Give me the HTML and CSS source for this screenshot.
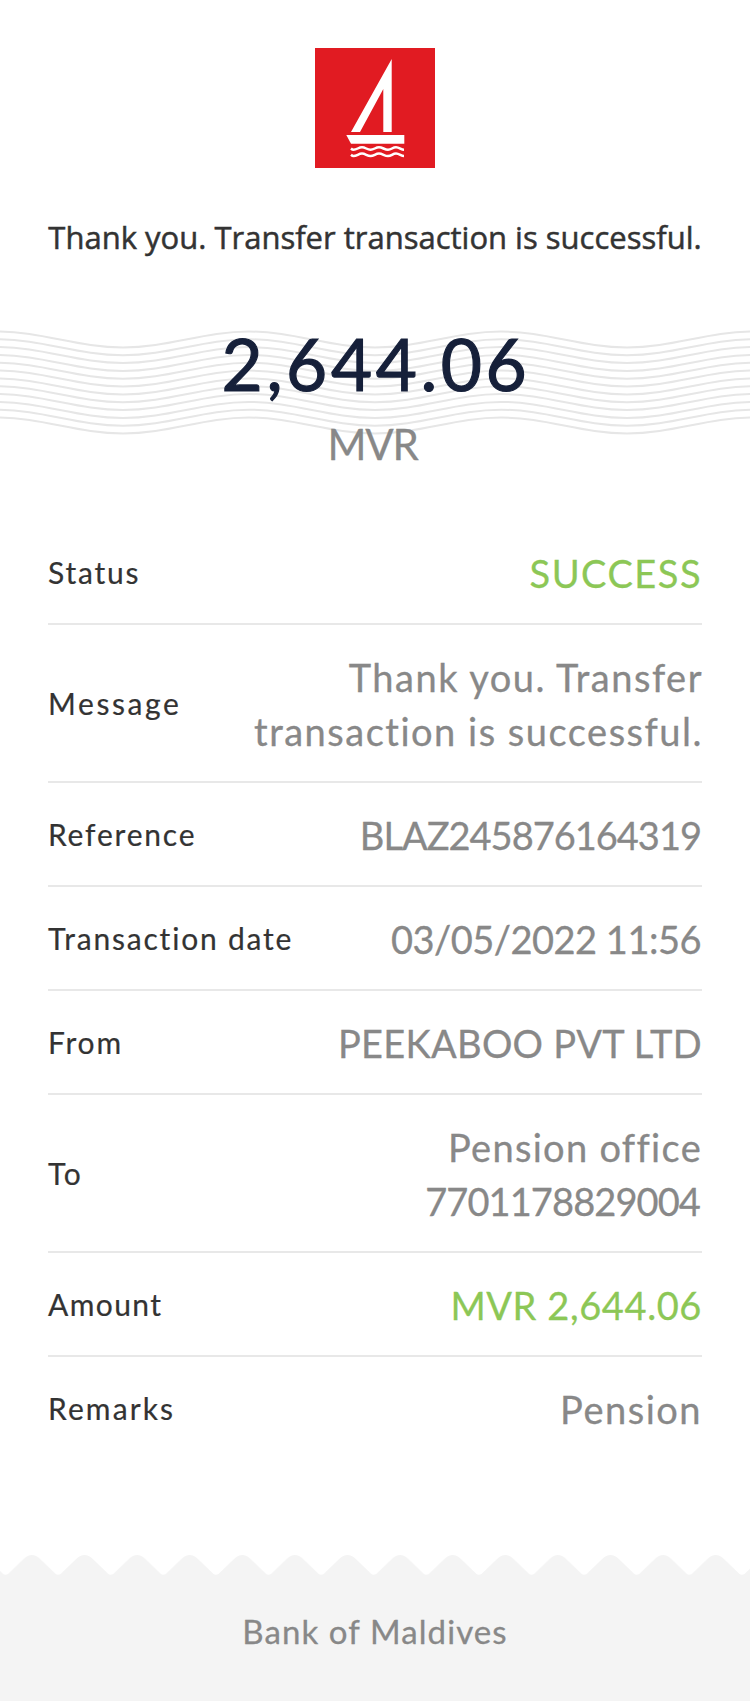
FILE: index.html
```html
<!DOCTYPE html>
<html lang="en">
<head>
    <meta charset="UTF-8">
    <meta name="viewport" content="width=device-width, initial-scale=1.0">
    <title>Transfer receipt</title>
    <link rel="stylesheet" href="styles.css">
</head>
<body>
    <div class="receipt">
        <header class="header">
            <svg class="logo" viewBox="0 0 120 120">
                <rect width="120" height="120" fill="#e11b22"/>
                <path d="M76.7 11V84H68.3V41L45 84H36Z" fill="#fff"/>
                <path d="M31.3 87H89.3V95.7H36Z" fill="#fff"/>
                <g fill="none" stroke="#fff" stroke-width="2.5">
                    <path id="sea" d="M36 100.5C37 101.4 37.5 101.8 38.5 101.8C42 101.8 43.5 99.2 47 99.2S52 101.8 55.5 101.8S60.5 99.2 64 99.2S69.5 101.8 73 101.8S77.5 99.2 81 99.2S86 101.8 89 101.8"/>
                    <use href="#sea" y="6.3"/>
                </g>
            </svg>
            <h1>Thank you. Transfer transaction is successful.</h1>
        </header>

        <section class="total">
            <svg class="waves" viewBox="0 0 750 110">
                <defs>
                    <path id="wave" d="M-129 19.5C-84 19.5-48 3.5-3 3.5S78 19.5 123 19.5S204 3.5 249 3.5S330 19.5 375 19.5S456 3.5 501 3.5S582 19.5 627 19.5S708 3.5 753 3.5"/>
                </defs>
                <g fill="none" stroke="#e6e6e6" stroke-width="2">
                    <use href="#wave"/>
                    <use href="#wave" y="7.8"/>
                    <use href="#wave" y="15.6"/>
                    <use href="#wave" y="23.4"/>
                    <use href="#wave" y="31.3"/>
                    <use href="#wave" y="39.1"/>
                    <use href="#wave" y="46.9"/>
                    <use href="#wave" y="54.7"/>
                    <use href="#wave" y="62.5"/>
                    <use href="#wave" y="70.4"/>
                    <use href="#wave" y="78.2"/>
                    <use href="#wave" y="86"/>
                </g>
            </svg>
            <p class="sum">2,644.06</p>
            <p class="currency">MVR</p>
        </section>

        <ul class="details">
            <li class="status"><span class="label">Status</span><span class="value green">SUCCESS</span></li>
            <li class="message"><span class="label">Message</span><span class="value">Thank you. Transfer<br>transaction is successful.</span></li>
            <li class="reference"><span class="label">Reference</span><span class="value">BLAZ245876164319</span></li>
            <li class="date"><span class="label">Transaction date</span><span class="value">03/05/2022 11:56</span></li>
            <li class="from"><span class="label">From</span><span class="value">PEEKABOO PVT LTD</span></li>
            <li class="to"><span class="label">To</span><span class="value">Pension office<br><span class="account">7701178829004</span></span></li>
            <li class="amount"><span class="label">Amount</span><span class="value green">MVR 2,644.06</span></li>
            <li class="remarks"><span class="label">Remarks</span><span class="value">Pension</span></li>
        </ul>

        <footer class="footer">
            <svg class="teeth" width="750" height="21">
                <defs>
                    <pattern id="tooth" x="5.6" width="52.6" height="21" patternUnits="userSpaceOnUse">
                        <path d="M0 20.8C2 20.8 3 19.5 4.5 18L18 5Q26.300-3 34.6 5L48.1 18C49.6 19.5 50.6 20.8 52.6 20.8V21H0Z" fill="#f4f4f4"/>
                    </pattern>
                </defs>
                <rect width="750" height="21" fill="url(#tooth)"/>
            </svg>
            <p>Bank of Maldives</p>
        </footer>
    </div>
</body>
</html>
```

FILE: styles.css
```css
* {
    margin: 0;
    padding: 0;
    box-sizing: border-box;
}

body {
    font-family: 'Lato', sans-serif;
    font-variant-ligatures: none;
    background: #fff;
    color: #333;
}

.receipt {
    width: 750px;
    min-height: 1701px;
    display: flex;
    flex-direction: column;
}

/* Logo and title */
.header {
    height: 320px;
    padding-top: 48px;
    display: flex;
    flex-direction: column;
    align-items: center;
}

.logo {
    width: 120px;
    height: 120px;
}

h1 {
    margin-top: 47px;
    font-family: 'Open Sans', sans-serif;
    font-size: 31px;
    font-weight: 400;
    line-height: 44px;
    white-space: nowrap;
    -webkit-text-stroke: 0.5px #333;
}

/* Transferred sum over the wave pattern */
.total {
    position: relative;
    height: 201px;
    text-align: center;
}

.waves {
    position: absolute;
    top: 8px;
    left: 0;
    width: 750px;
    height: 110px;
}

.sum {
    position: relative;
    padding-left: 2px;
    font-size: 71px;
    line-height: 88px;
    letter-spacing: 3.6px;
    color: #16203a;
    -webkit-text-stroke: 1.2px #16203a;
}

.currency {
    position: relative;
    padding-right: 5px;
    font-size: 42px;
    line-height: 72px;
    letter-spacing: -1.3px;
    color: #888;
    -webkit-text-stroke: 0.3px #888;
}

/* Details list */
.details {
    list-style: none;
    padding: 0 48px;
}

.details li {
    display: flex;
    justify-content: space-between;
    align-items: center;
    padding: 24px 0;
    border-bottom: 2px solid #e8e8e8;
}

.details li:last-child {
    border-bottom: none;
}

.label {
    font-size: 30px;
    letter-spacing: 1.8px;
    -webkit-text-stroke: 0.2px currentColor;
}

.value {
    margin: 1px 0 -1px 0;
    font-size: 38px;
    line-height: 54px;
    letter-spacing: 1.5px;
    color: #888;
    text-align: right;
    white-space: nowrap;
    -webkit-text-stroke: 0.3px currentColor;
}

.green {
    color: #8cc756;
}

.message .label {
    letter-spacing: 2.6px;
}

.message .value {
    margin-right: -1px;
}

.amount .label {
    letter-spacing: 1.4px;
}

.remarks .label {
    letter-spacing: 2.1px;
}

.reference .value {
    margin-right: 1px;
    letter-spacing: -1px;
}

.date .value {
    margin-right: 1px;
    letter-spacing: -0.5px;
}

.from .value {
    letter-spacing: 0.3px;
}

.to .value {
    letter-spacing: 1.3px;
}

.account {
    margin-right: 2px;
    letter-spacing: -0.9px;
}

.amount .value {
    letter-spacing: 0.6px;
}

/* Footer */
.footer {
    margin-top: auto;
}

.teeth {
    display: block;
}

.footer p {
    height: 126px;
    padding-top: 35px;
    background: #f4f4f4;
    font-size: 33px;
    line-height: 42px;
    letter-spacing: 1.1px;
    color: #888;
    text-align: center;
    -webkit-text-stroke: 0.3px currentColor;
}
```
